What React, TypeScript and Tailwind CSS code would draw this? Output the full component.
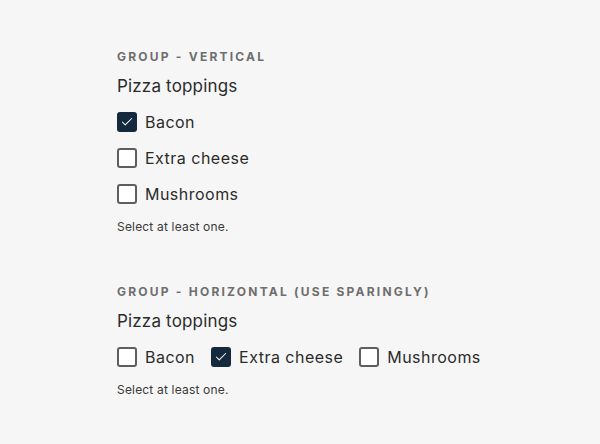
import { Check } from 'lucide-react'

type Option = { label: string; checked: boolean }

function Box({ checked }: { checked: boolean }) {
	return checked ? (
		<span className="w-5 h-5 rounded-[3px] bg-[#14293d] flex items-center justify-center shrink-0">
			<Check className="w-3.5 h-3.5 text-white" strokeWidth={1.75} />
		</span>
	) : (
		<span className="w-5 h-5 rounded-[3px] border-2 border-[#5e5e5e] bg-white shrink-0" />
	)
}

function Group({
	title,
	options,
	horizontal,
}: {
	title: string
	options: Option[]
	horizontal?: boolean
}) {
	return (
		<div className="flex flex-col">
			<h2 className="text-[12px] leading-4 font-bold tracking-[0.185em] text-[#6e6e6e] uppercase">
				{title}
			</h2>
			<p className="mt-[11px] text-[17px] leading-5 tracking-[0.01em] text-[#2b2b2b]">
				Pizza toppings
			</p>
			<div
				className={
					horizontal
						? 'mt-[16px] flex gap-[16px]'
						: 'mt-[16px] flex flex-col gap-4'
				}
			>
				{options.map((o) => (
					<label key={o.label} className="flex items-center gap-2 h-5">
						<Box checked={o.checked} />
						<span className="text-[16px] tracking-[0.03em] text-[#2b2b2b]">
							{o.label}
						</span>
					</label>
				))}
			</div>
			<p className="mt-[15px] text-[12px] leading-4 tracking-[0.015em] text-[#3a3a3a]">
				Select at least one.
			</p>
		</div>
	)
}

export default function App() {
	return (
		<div className="w-[600px] h-[444px] bg-[#f6f6f6] pl-[117px] pt-[49px] flex flex-col gap-[49px] font-['Inter',sans-serif]">
			<Group
				title="Group - Vertical"
				options={[
					{ label: 'Bacon', checked: true },
					{ label: 'Extra cheese', checked: false },
					{ label: 'Mushrooms', checked: false },
				]}
			/>
			<Group
				title="Group - Horizontal (use sparingly)"
				horizontal
				options={[
					{ label: 'Bacon', checked: false },
					{ label: 'Extra cheese', checked: true },
					{ label: 'Mushrooms', checked: false },
				]}
			/>
		</div>
	)
}
